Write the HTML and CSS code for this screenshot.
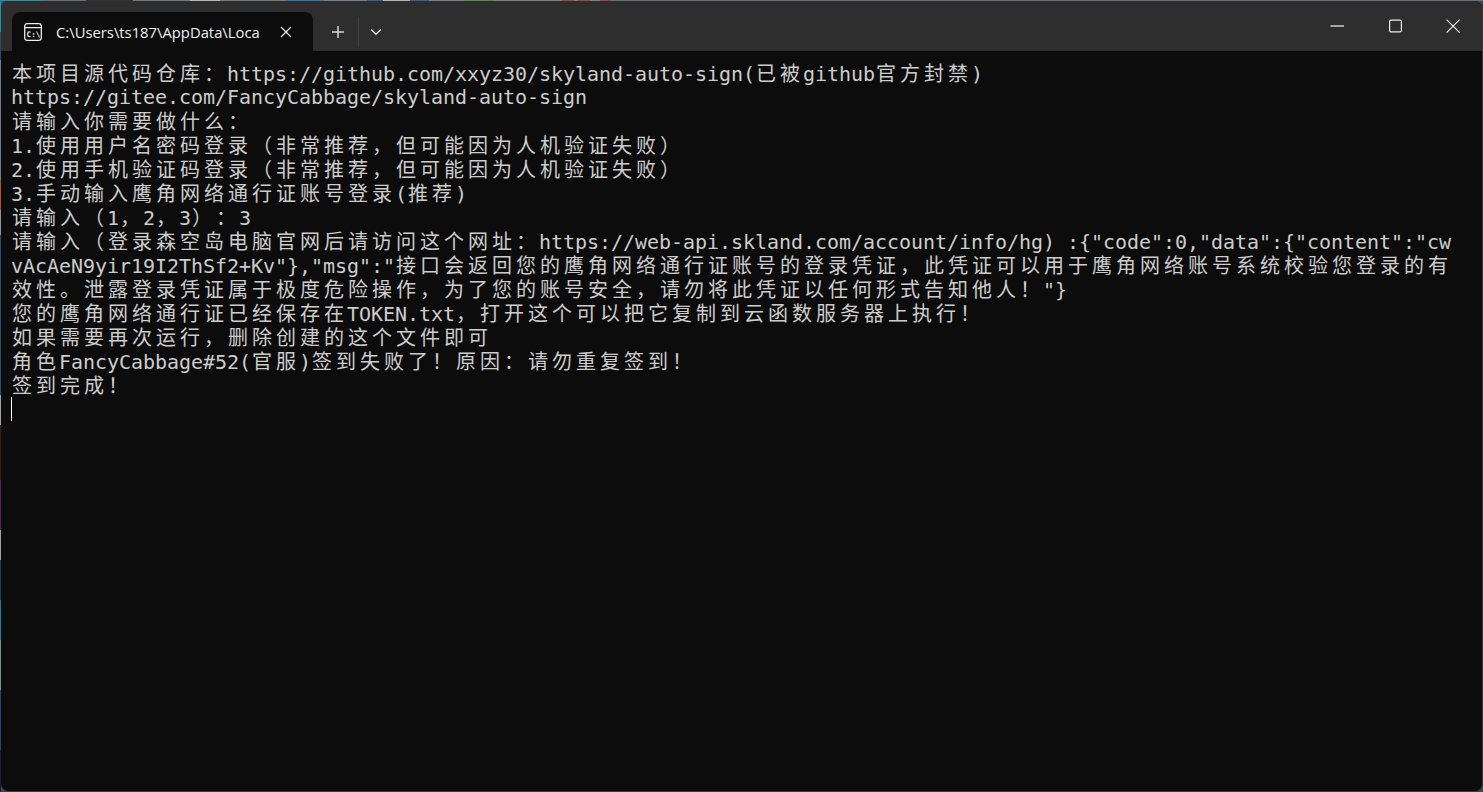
FILE: index.html
```html
<!DOCTYPE html>
<html lang="zh-CN">
<head>
<meta charset="utf-8">
<title>Terminal</title>
<link rel="stylesheet" href="styles.css">
</head>
<body>
<div class="window">
  <header class="titlebar">
    <div class="tab">
      <svg class="tab-icon" width="18" height="18" viewBox="0 0 18 18" fill="none" stroke="#ececec" stroke-width="1.3">
        <rect x=".7" y=".7" width="16.600" height="16.600" rx="2.500"/>
        <path d="M1 4.700h16"/>
        <text class="icon-text" x="2.600" y="14">C:\</text>
      </svg>
      <span class="tab-title">C:\Users\ts187\AppData\Loca</span>
      <svg class="tab-close" width="12" height="12" viewBox="0 0 12 12" stroke="#ececec" stroke-width="1.2"><path d="M1 1l10 10M11 1L1 11"/></svg>
    </div>
    <div class="tab-actions">
      <button class="action action-new"><svg width="12" height="12" viewBox="0 0 12 12" stroke="#d6d6d6" stroke-width="1.500"><path d="M6 0v12M0 6h12"/></svg></button>
      <span class="divider"></span>
      <button class="action action-menu"><svg width="12" height="8" viewBox="0 0 12 8" fill="none" stroke="#e0e0e0" stroke-width="1.300"><path d="M1.200 1.500L6 6.300l4.800-4.800"/></svg></button>
    </div>
    <div class="controls">
      <button class="control"><svg width="14" height="14" viewBox="0 0 14 14" stroke="#d0d0d0" stroke-width="1.300"><path d="M.5 7h13.500"/></svg></button>
      <button class="control"><svg width="14" height="14" viewBox="0 0 14 14" fill="none" stroke="#ececec" stroke-width="1.200"><rect x="1.600" y="1.100" width="11.800" height="11.800" rx="1.500"/></svg></button>
      <button class="control"><svg width="14" height="14" viewBox="0 0 14 14" stroke="#ececec" stroke-width="1.200"><path d="M.6.600l13 13M13.600.600l-13 13"/></svg></button>
    </div>
  </header>
  <main class="terminal">
    <div class="line"><span class="c">本项目源代码仓库：</span>https://github.com/xxyz30/skyland-auto-sign(<span class="c">已被</span>github<span class="c">官方封禁</span>)</div>
    <div class="line">https://gitee.com/FancyCabbage/skyland-auto-sign</div>
    <div class="line"><span class="c">请输入你需要做什么：</span></div>
    <div class="line">1.<span class="c">使用用户名密码登录（非常推荐，但可能因为人机验证失败）</span></div>
    <div class="line">2.<span class="c">使用手机验证码登录（非常推荐，但可能因为人机验证失败）</span></div>
    <div class="line">3.<span class="c">手动输入鹰角网络通行证账号登录</span>(<span class="c">推荐</span>)</div>
    <div class="line"><span class="c">请输入（</span>1<span class="c">，</span>2<span class="c">，</span>3<span class="c">）：</span>3</div>
    <div class="line"><span class="c">请输入（登录森空岛电脑官网后请访问这个网址：</span>https://web-api.skland.com/account/info/hg) :{"code":0,"data":{"content":"cw</div>
    <div class="line">vAcAeN9yir19I2ThSf2+Kv"},"msg":"<span class="c">接口会返回您的鹰角网络通行证账号的登录凭证，此凭证可以用于鹰角网络账号系统校验您登录的有</span></div>
    <div class="line"><span class="c">效性。泄露登录凭证属于极度危险操作，为了您的账号安全，请勿将此凭证以任何形式告知他人！</span>"}</div>
    <div class="line"><span class="c">您的鹰角网络通行证已经保存在</span>TOKEN.txt<span class="c">，打开这个可以把它复制到云函数服务器上执行！</span></div>
    <div class="line"><span class="c">如果需要再次运行，删除创建的这个文件即可</span></div>
    <div class="line"><span class="c">角色</span>FancyCabbage#52(<span class="c">官服</span>)<span class="c">签到失败了！原因：请勿重复签到！</span></div>
    <div class="line"><span class="c">签到完成！</span></div>
    <div class="line"><span class="cursor"></span></div>
  </main>
</div>
</body>
</html>
```
FILE: styles.css
```css
* { box-sizing: border-box; }
html, body { margin: 0; height: 100%; overflow: hidden; }
body {
  padding: 1px 0 0 1px;
  background-color: #39485a;
  background-repeat: no-repeat;
  background-size: 100% 1px, 1px 100%;
  background-image:
    linear-gradient(90deg,
      #1f93ab 0 43px, #5f7385 43px 86px, #30343a 86px 133px, #6b7c8c 133px 190px,
      #b8b8b4 190px 220px, #6e7a86 220px 286px, #2a7ab0 286px 324px, #77808a 324px 367px,
      #3a5fa0 367px 383px, #b4b4b0 383px 410px, #3a5fa0 410px 429px, #7c858c 429px 464px,
      #5a8a4a 464px 495px, #7b8288 495px 562px, #a04a3a 562px 574px, #7b8288 574px 578px,
      #a04a3a 578px 590px, #7b8288 590px 600px, #a04a3a 600px 610px, #6a7078 610px 100%),
    linear-gradient(180deg,
      #1f93ab 0 32px, #30495e 32px 60px, #6f7f8e 60px 180px, #b2561f 180px 210px,
      #8d949a 210px 235px, #24506e 235px 395px, #a0a0a0 395px 425px, #3a1f1f 425px 480px,
      #4f2f4a 480px 530px, #a0a0a0 530px 560px, #1c3a66 560px 600px, #1f7f9f 600px 640px,
      #7f8a90 640px 690px, #2f3f7a 690px 750px, #1a2030 750px 100%);
}
.window {
  height: 100%;
  display: flex;
  flex-direction: column;
  border-radius: 8px;
  border-right: 1px solid #3a3a3a;
  border-bottom: 1px solid #3a3a3a;
  overflow: hidden;
  background: #0c0c0c;
}
.titlebar {
  height: 50px;
  flex: none;
  display: flex;
  align-items: flex-end;
  padding-left: 11px;
  background: #2e2e2e;
}
.tab {
  width: 301px;
  height: 39px;
  flex: none;
  display: flex;
  align-items: center;
  padding: 0 21px 0 12px;
  background: #0c0c0c;
  border-radius: 8px 8px 0 0;
  color: #f0f0f0;
}
.tab-icon { flex: none; }
.icon-text {
  font: bold 7.6px "DejaVu Sans Mono", monospace;
  fill: #ececec;
  stroke: none;
}
.tab-title {
  margin-left: 14px;
  flex: 1;
  font: 14.8px/20px "Open Sans", sans-serif;
  white-space: nowrap;
  overflow: hidden;
}
.tab-close { flex: none; }
.tab-actions {
  height: 39px;
  display: flex;
  align-items: center;
  padding-left: 5px;
}
.action {
  background: none;
  border: 0;
  padding: 0;
  display: flex;
  align-items: center;
  justify-content: center;
}
.action-new { width: 40px; height: 30px; }
.divider { width: 1px; height: 30px; background: #424242; }
.action-menu { width: 33px; height: 30px; }
.controls {
  margin-left: auto;
  align-self: flex-start;
  display: flex;
}
.control {
  width: 58px;
  height: 50px;
  background: none;
  border: 0;
  padding: 0;
  display: flex;
  align-items: center;
  justify-content: center;
}
.terminal {
  flex: 1;
  padding: 10px 0 0 10px;
  color: #cccccc;
  font: 20px/24px "DejaVu Sans Mono", monospace;
  letter-spacing: -0.04px;
}
.line {
  height: 24px;
  white-space: pre;
}
.c {
  margin: 0 -1px 0 1px;
  font-family: "Noto Sans CJK SC", sans-serif;
  font-feature-settings: "chws" 0, "palt" 0;
  font-kerning: none;
  text-spacing-trim: space-all;
  letter-spacing: 4px;
  line-height: 24px;
}
.cursor {
  display: block;
  width: 1px;
  height: 24px;
  background: #ffffff;
}
```
